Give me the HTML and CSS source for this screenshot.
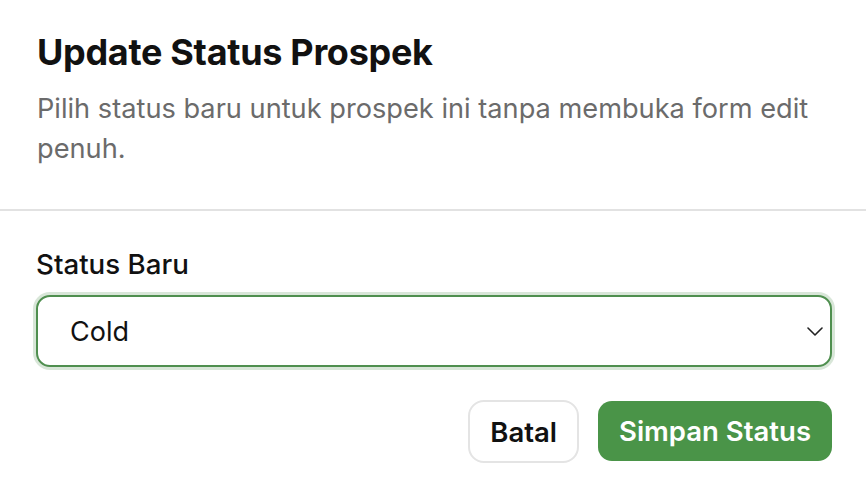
FILE: index.html
```html
<!DOCTYPE html>
<html lang="id">
<head>
<meta charset="utf-8">
<title>Update Status Prospek</title>
<link rel="stylesheet" href="styles.css">
</head>
<body>
<div class="dialog">
  <div class="dialog-header">
    <h2 class="dialog-title">Update Status Prospek</h2>
    <p class="dialog-desc">Pilih status baru untuk prospek ini tanpa membuka form edit penuh.</p>
  </div>
  <div class="dialog-body">
    <label class="field-label" for="status">Status Baru</label>
    <div class="select-wrap">
      <select id="status" class="select">
        <option>Cold</option>
        <option>Warm</option>
        <option>Hot</option>
      </select>
      <svg class="chevron" viewBox="0 0 16 9" width="16" height="9" aria-hidden="true"><path d="M1 1l7 7 7-7" fill="none" stroke="#222" stroke-width="1.6" stroke-linecap="round" stroke-linejoin="round"/></svg>
    </div>
    <div class="actions">
      <button class="btn btn-outline" type="button">Batal</button>
      <button class="btn btn-primary" type="button">Simpan Status</button>
    </div>
  </div>
</div>
</body>
</html>
```

FILE: styles.css
```css
* { box-sizing: border-box; }
html, body { margin: 0; padding: 0; background: #fff; }
body { font-family: Inter, "Noto Sans", sans-serif; color: #111; }

.dialog { width: 866px; height: 488px; }

.dialog-header {
  padding: 30px 37px 0;
  height: 211px;
  border-bottom: 2px solid #e2e2e2;
}
.dialog-title {
  margin: 0;
  font-size: 36px;
  line-height: 44px;
  font-weight: 700;
  letter-spacing: -0.3px;
  color: #111;
}
.dialog-desc {
  margin: 15px 0 0;
  font-size: 27.2px;
  line-height: 40px;
  color: #6b6b6b;
}

.dialog-body { padding: 37px 34px 0 36px; }
.field-label {
  display: block;
  font-size: 27.7px;
  line-height: 32px;
  font-weight: 500;
  color: #111;
  margin-bottom: 15px;
}
.select-wrap { position: relative; }
.select {
  -webkit-appearance: none;
  appearance: none;
  width: 100%;
  height: 72px;
  border: 2px solid #4f8f4f;
  border-radius: 14px;
  box-shadow: 0 0 0 3px rgba(79, 143, 79, 0.22);
  background: #fff;
  padding: 0 60px 0 32px;
  font-family: inherit;
  font-size: 27px;
  color: #111;
  outline: none;
}
.chevron {
  position: absolute;
  right: 9px;
  top: 32px;
  pointer-events: none;
}
.actions {
  display: flex;
  justify-content: flex-end;
  align-items: flex-start;
  gap: 19px;
  margin-top: 33px;
}
.btn {
  font-family: inherit;
  font-size: 27.5px;
  font-weight: 600;
  height: 63px;
  border-radius: 16px;
  padding: 0 20px;
  cursor: pointer;
}
.btn-outline {
  background: #fff;
  color: #111;
  border: 2px solid #e4e4e4;
}
.btn-primary {
  background: #4a9448;
  color: #fff;
  border: 0;
  height: 60px;
  border-radius: 14px;
  margin-top: 1px;
  padding: 0 21px;
}
```
